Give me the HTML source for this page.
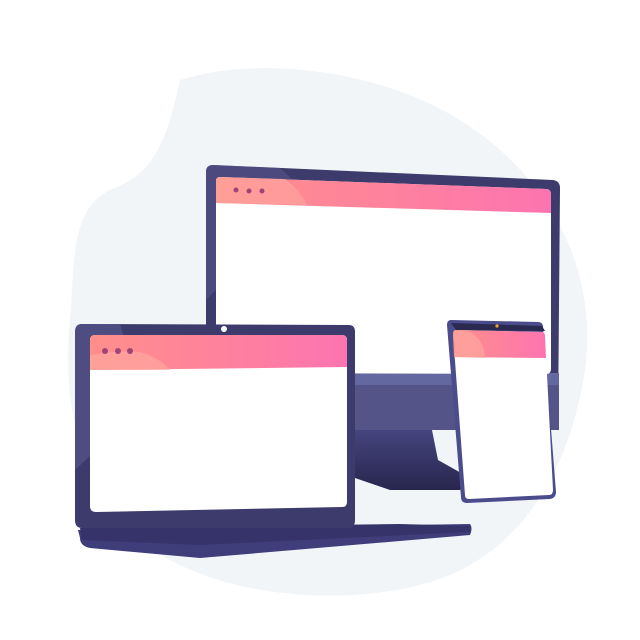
<!DOCTYPE html>
<html><head><style>html,body{margin:0;padding:0;background:#fff;width:640px;height:640px;overflow:hidden}</style></head>
<body>
<svg width="640" height="640" viewBox="0 0 640 640" xmlns="http://www.w3.org/2000/svg">
<defs>
<linearGradient id="pk" x1="0" x2="1" y1="0" y2="0"><stop offset="0" stop-color="#ff8f8a"/><stop offset="1" stop-color="#fd74b0"/></linearGradient>
<linearGradient id="nk" x1="0" x2="0" y1="0" y2="1"><stop offset="0" stop-color="#45457f"/><stop offset="1" stop-color="#27264d"/></linearGradient>
</defs>
<path d="M180,80 C260,55 380,70 460,120 C540,170 600,260 585,370 C570,470 520,560 420,585 C320,610 200,590 140,540 C90,500 60,420 70,320 C75,260 70,210 110,190 C150,175 165,150 180,80 Z" fill="#f2f5f8"/>
<!-- monitor -->
<path d="M340,430 L432,430 L438,460 L470,478 L460,490 L390,490 L355,478 Z" fill="url(#nk)"/>
<path d="M206,172 Q206,165 213,165 L553,180 Q560,181 560,188 L558,422 Q558,430 550,430 L214,430 Q206,430 206,422 Z" fill="#3d3b6b"/>
<path d="M206,172 Q206,165 213,165 L280,168 Q300,185 305,200 L206,300 Z" fill="#56548a" opacity="0.6"/>
<rect x="216" y="373" width="343" height="57" fill="#545488"/>
<rect x="216" y="373" width="343" height="12" fill="#6468a0"/>
<path d="M220,177 L546,189 Q551,189 551,195 L551,369 Q551,374 546,374 L221,373 Q216,373 216,368 L216,181 Q216,177 220,177 Z" fill="#fff"/>
<path d="M220,177 L546,189 Q551,189 551,195 L551,213 L216,203 L216,181 Q216,177 220,177 Z" fill="url(#pk)"/>
<path d="M216,181 Q216,177 220,177 L285,179 Q300,190 307,205 L216,203 Z" fill="#ffa6a0" opacity="0.6"/>
<circle cx="236" cy="190" r="2.5" fill="#a04478"/><circle cx="249" cy="191" r="2.5" fill="#a04478"/><circle cx="262" cy="191" r="2.5" fill="#a04478"/>
<!-- laptop -->
<path d="M78,530 L470,524 Q473,528 470,535 L200,558 L90,548 Q80,546 80,538 Z" fill="#3f3e7a"/>
<path d="M80,528 L400,524 L470,526 L470,532 L200,545 L82,540 Z" fill="#35336a"/>
<path d="M82,324 L349,325 Q355,325 355,332 L355,520 Q355,528 348,528 L82,528 Q75,528 75,520 L75,332 Q75,324 82,324 Z" fill="#3d3b6b"/>
<path d="M82,324 L120,324 Q130,360 150,400 L75,470 L75,332 Q75,324 82,324 Z" fill="#56548a" opacity="0.7"/>
<path d="M95,335 L342,335 Q347,335 347,340 L347,502 Q347,507 342,507 L96,512 Q90,512 90,506 L90,340 Q90,335 95,335 Z" fill="#fff"/>
<path d="M95,335 L342,335 Q347,335 347,340 L347,367 L90,370 L90,340 Q90,335 95,335 Z" fill="url(#pk)"/>
<path d="M90,355 Q120,350 140,352 Q160,358 170,370 L90,370 Z" fill="#ffa6a0" opacity="0.7"/>
<circle cx="105" cy="351" r="3" fill="#a04478"/><circle cx="118" cy="351" r="3" fill="#a04478"/><circle cx="130" cy="351" r="3" fill="#a04478"/>
<circle cx="224" cy="329" r="3" fill="#fff"/>
<!-- phone -->
<path d="M451,320 L538,322 Q543,322 543,327 L556,492 Q556,498 550,499 L467,503 Q461,503 461,497 L447,325 Q447,320 451,320 Z" fill="#4a4c8c"/>
<path d="M456,330 L545,331 L542,326 L451,323 Z" fill="#2a2950"/>
<path d="M456,330 L542,332 Q545,332 545,336 L553,490 Q553,495 549,495 L469,499 Q465,499 465,495 L453,334 Q453,330 456,330 Z" fill="#fff"/>
<path d="M456,330 L542,332 Q545,332 545,336 L546,358 L454,357 L453,334 Q453,330 456,330 Z" fill="url(#pk)"/>
<path d="M454,331 L468,331 Q484,338 485,358 L455,357 Z" fill="#ffa6a0" opacity="0.7"/>
<circle cx="497" cy="326" r="1.6" fill="#f5a623"/>
</svg>
</body></html>
